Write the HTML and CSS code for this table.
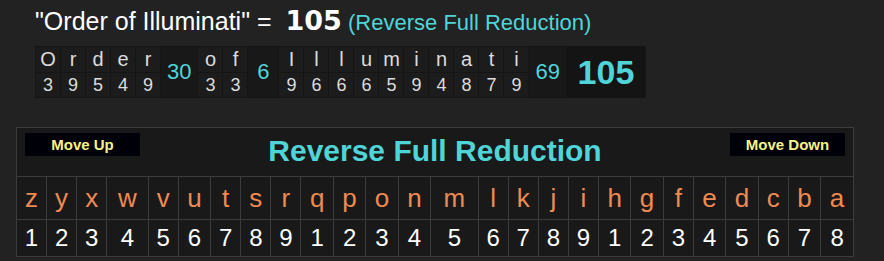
FILE: index.html
```html
<!DOCTYPE html>
<html>
<head>
<meta charset="utf-8">
<link rel="stylesheet" href="styles.css">
</head>
<body>
<div class="wrap">
  <div class="heading"><span class="phrase">"Order of Illuminati" = </span><span class="sum">105</span><span class="cipher"> (Reverse Full Reduction)</span></div>
  <table class="bd">
    <tr>
      <td class="ch">O</td><td class="ch">r</td><td class="ch">d</td><td class="ch">e</td><td class="ch">r</td>
      <td class="sub" rowspan="2">30</td>
      <td class="ch">o</td><td class="ch">f</td>
      <td class="sub" rowspan="2">6</td>
      <td class="ch">I</td><td class="ch">l</td><td class="ch">l</td><td class="ch">u</td><td class="ch">m</td><td class="ch">i</td><td class="ch">n</td><td class="ch">a</td><td class="ch">t</td><td class="ch">i</td>
      <td class="sub" rowspan="2">69</td>
      <td class="tot" rowspan="2">105</td>
    </tr>
    <tr>
      <td class="nm">3</td><td class="nm">9</td><td class="nm">5</td><td class="nm">4</td><td class="nm">9</td>
      <td class="nm">3</td><td class="nm">3</td>
      <td class="nm">9</td><td class="nm">6</td><td class="nm">6</td><td class="nm">6</td><td class="nm">5</td><td class="nm">9</td><td class="nm">4</td><td class="nm">8</td><td class="nm">7</td><td class="nm">9</td>
    </tr>
  </table>
</div>
<table class="panel">
  <tr>
    <td class="head" colspan="26">
      <div class="headrow">
        <button class="btn">Move Up</button>
        <span class="title">Reverse Full Reduction</span>
        <button class="btn">Move Down</button>
      </div>
    </td>
  </tr>
  <tr class="letters">
    <td>z</td><td>y</td><td>x</td><td>w</td><td>v</td><td>u</td><td>t</td><td>s</td><td>r</td><td>q</td><td>p</td><td>o</td><td>n</td><td>m</td><td>l</td><td>k</td><td>j</td><td>i</td><td>h</td><td>g</td><td>f</td><td>e</td><td>d</td><td>c</td><td>b</td><td>a</td>
  </tr>
  <tr class="nums">
    <td>1</td><td>2</td><td>3</td><td>4</td><td>5</td><td>6</td><td>7</td><td>8</td><td>9</td><td>1</td><td>2</td><td>3</td><td>4</td><td>5</td><td>6</td><td>7</td><td>8</td><td>9</td><td>1</td><td>2</td><td>3</td><td>4</td><td>5</td><td>6</td><td>7</td><td>8</td>
  </tr>
</table>
</body>
</html>
```
FILE: styles.css
```css
html, body {
  margin: 0;
  padding: 0;
  background: #222222;
  font-family: "Liberation Sans", Arial, sans-serif;
}

.wrap {
  padding: 6px 0 0 35px;
}

.heading {
  height: 30px;
  line-height: 30px;
  white-space: nowrap;
}

.phrase {
  font-size: 25px;
  color: #ffffff;
}

.sum {
  margin-left: 7px;
  font-family: "DejaVu Sans", sans-serif;
  font-weight: bold;
  font-size: 27px;
  color: #ffffff;
}

.cipher {
  font-size: 22px;
  color: #4fd5d8;
}

.bd {
  border-collapse: collapse;
  margin-top: 10px;
}

.bd td {
  padding: 0;
  text-align: center;
  border: 1px solid #151515;
  background: #1c1c1c;
  color: #dcdcdc;
}

.bd .ch {
  width: 24px;
  height: 25px;
  font-size: 20px;
  line-height: 25px;
  vertical-align: bottom;
}

.bd .nm {
  width: 24px;
  height: 24px;
  font-size: 18px;
  line-height: 24px;
}

.bd .sub {
  box-sizing: border-box;
  width: 31px;
  padding: 0 6px;
  font-size: 22px;
  color: #4fd5d8;
  background: #181818;
}

.bd .tot {
  width: 78px;
  padding: 0;
  font-size: 34px;
  font-weight: bold;
  color: #4fd5d8;
  background: #141414;
}

.panel {
  margin: 29px 0 0 16px;
  width: 838px;
  border-collapse: collapse;
  background: #191919;
  border: 1px solid #3c3c3c;
}

.panel td {
  border: 1px solid #3c3c3c;
  padding: 0;
  text-align: center;
}

.panel .head {
  height: 43px;
  padding: 5px 8px 0 8px;
  vertical-align: top;
}

.headrow {
  display: flex;
  justify-content: space-between;
  align-items: flex-start;
}

.btn {
  width: 115px;
  height: 23px;
  border: none;
  background: #000008;
  color: #f6f28a;
  font-family: "Liberation Sans", Arial, sans-serif;
  font-weight: bold;
  font-size: 15px;
  padding: 0;
}

.title {
  font-size: 30px;
  font-weight: bold;
  color: #4fd5d8;
  line-height: 32px;
  margin-top: 2px;
}

.letters td {
  height: 42px;
  font-size: 26px;
  color: #ef8a52;
  line-height: 42px;
}

.nums td {
  height: 36px;
  font-size: 24px;
  color: #ffffff;
  line-height: 36px;
}
```
